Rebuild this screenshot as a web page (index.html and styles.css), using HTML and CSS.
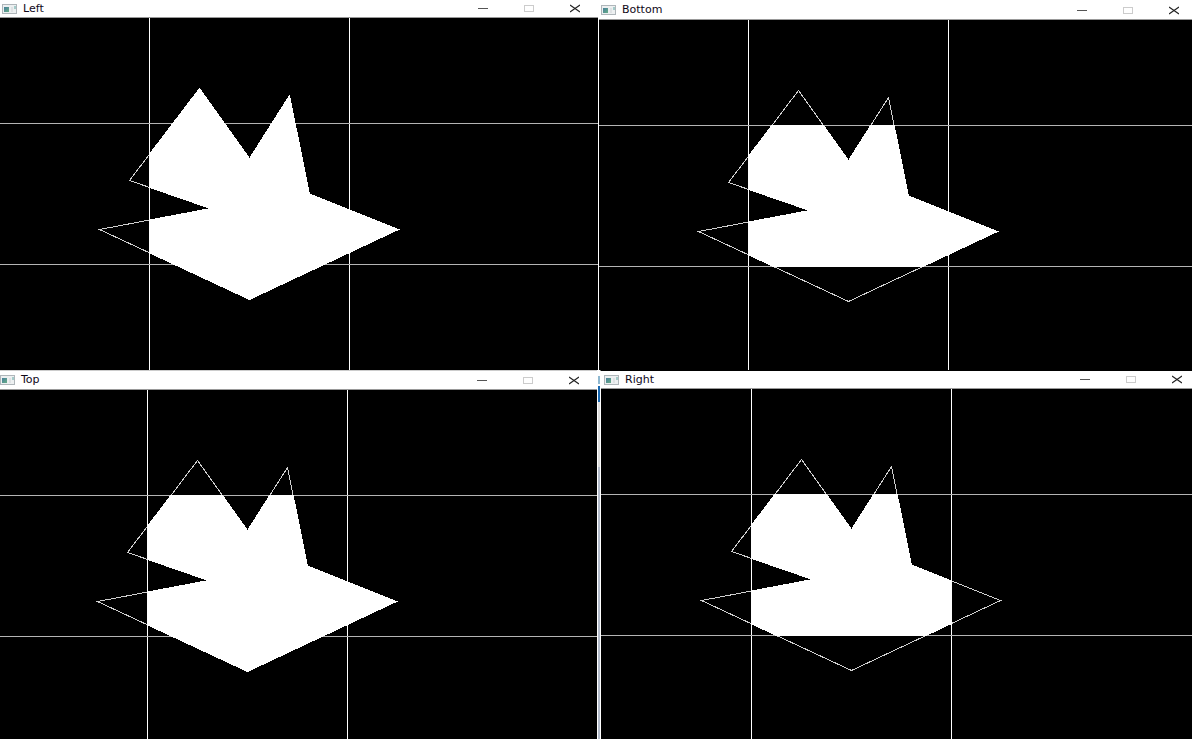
FILE: index.html
```html
<!DOCTYPE html>
<html lang="en">
<head>
<meta charset="utf-8">
<title>Polygon clipping</title>
<link rel="stylesheet" href="styles.css">
</head>
<body>
<svg class="defs" aria-hidden="true">
  <defs>
    <polygon id="shape" points="199.5,70.5 129.5,162.5 210.5,190.5 99.5,211.5 249.5,281.5 398.5,211.5 309.5,176 289.5,77.5 249.5,140.5"/>
    <g id="guides">
      <path d="M149.5 0V2000M349.5 0V2000" stroke="#fff"/>
      <path d="M-10 105.5H3000M-10 246.5H3000" stroke="#b4b4b4"/>
    </g>
    <clipPath id="clip-left"><rect x="149" y="0" width="400" height="400"/></clipPath>
    <clipPath id="clip-top"><rect x="149" y="105" width="400" height="400"/></clipPath>
    <clipPath id="clip-bottom"><rect x="149" y="105" width="400" height="142"/></clipPath>
    <clipPath id="clip-right"><rect x="149" y="105" width="201" height="142"/></clipPath>
    <linearGradient id="app-fill" x1="0" y1="0" x2="1" y2="1"><stop offset="0" stop-color="#477f9b"/><stop offset="1" stop-color="#68ad87"/></linearGradient>
    <symbol id="app" viewBox="0 0 15 10">
      <rect x=".5" y=".5" width="14" height="9" fill="#edf0f1" stroke="#afb6ba"/>
      <rect x="2" y="3" width="5" height="5" fill="url(#app-fill)"/>
      <rect x="9" y="3" width="2" height="5" fill="#dfe2e4"/>
      <rect x="12" y="2" width="2" height="3" fill="#a5ccca"/>
    </symbol>
    <symbol id="min" viewBox="0 0 10 9"><path d="M0 4.5H10" stroke="#555"/></symbol>
    <symbol id="max" viewBox="0 0 10 9"><rect x=".5" y="1.5" width="9" height="6" fill="none" stroke="#ccc"/></symbol>
    <symbol id="close" viewBox="0 0 10 9"><path d="M0 1L10 8M10 1L0 8" stroke="#222" stroke-width="1.1"/></symbol>
  </defs>
</svg>
<main class="desktop">
  <div class="row row-first">
    <section class="window window-left">
      <header class="titlebar">
        <svg class="app-icon" aria-hidden="true"><use href="#app"/></svg>
        <h1 class="title">Left</h1>
        <div class="controls">
          <button class="control" aria-label="Minimize"><svg class="glyph"><use href="#min"/></svg></button>
          <button class="control" aria-label="Maximize" disabled><svg class="glyph"><use href="#max"/></svg></button>
          <button class="control" aria-label="Close"><svg class="glyph"><use href="#close"/></svg></button>
        </div>
      </header>
      <svg class="canvas" role="img" aria-label="Polygon clipped on the left">
        <g><use href="#guides"/><use class="outline" href="#shape"/><g clip-path="url(#clip-left)"><use class="solid" href="#shape"/></g></g>
      </svg>
    </section>
    <section class="window window-bottom">
      <header class="titlebar">
        <svg class="app-icon" aria-hidden="true"><use href="#app"/></svg>
        <h1 class="title">Bottom</h1>
        <div class="controls">
          <button class="control" aria-label="Minimize"><svg class="glyph"><use href="#min"/></svg></button>
          <button class="control" aria-label="Maximize" disabled><svg class="glyph"><use href="#max"/></svg></button>
          <button class="control" aria-label="Close"><svg class="glyph"><use href="#close"/></svg></button>
        </div>
      </header>
      <svg class="canvas" role="img" aria-label="Polygon clipped on the left, top and bottom">
        <g><use href="#guides"/><use class="outline" href="#shape"/><g clip-path="url(#clip-bottom)"><use class="solid" href="#shape"/></g></g>
      </svg>
    </section>
  </div>
  <div class="row row-second">
    <section class="window window-top">
      <header class="titlebar">
        <svg class="app-icon" aria-hidden="true"><use href="#app"/></svg>
        <h1 class="title">Top</h1>
        <div class="controls">
          <button class="control" aria-label="Minimize"><svg class="glyph"><use href="#min"/></svg></button>
          <button class="control" aria-label="Maximize" disabled><svg class="glyph"><use href="#max"/></svg></button>
          <button class="control" aria-label="Close"><svg class="glyph"><use href="#close"/></svg></button>
        </div>
      </header>
      <svg class="canvas" role="img" aria-label="Polygon clipped on the left and top">
        <g transform="translate(-2 0)"><use href="#guides"/><use class="outline" href="#shape"/><g clip-path="url(#clip-top)"><use class="solid" href="#shape"/></g></g>
      </svg>
    </section>
    <div class="backdrop"></div>
    <section class="window window-right">
      <header class="titlebar">
        <svg class="app-icon" aria-hidden="true"><use href="#app"/></svg>
        <h1 class="title">Right</h1>
        <div class="controls">
          <button class="control" aria-label="Minimize"><svg class="glyph"><use href="#min"/></svg></button>
          <button class="control" aria-label="Maximize" disabled><svg class="glyph"><use href="#max"/></svg></button>
          <button class="control" aria-label="Close"><svg class="glyph"><use href="#close"/></svg></button>
        </div>
      </header>
      <svg class="canvas" role="img" aria-label="Polygon clipped on all four sides">
        <g transform="translate(1 0)"><use href="#guides"/><use class="outline" href="#shape"/><g clip-path="url(#clip-right)"><use class="solid" href="#shape"/></g></g>
      </svg>
    </section>
  </div>
</main>
</body>
</html>
```
FILE: styles.css
```css
* { box-sizing: border-box; }
body { margin: 0; background: #000; font-family: "DejaVu Sans", sans-serif; }
.defs { position: absolute; width: 0; height: 0; }
.desktop { display: flex; flex-direction: column; min-height: 100vh; }
.row { display: flex; }
.row-first { flex: 370 1 0; }
.row-second { flex: 369 1 0; }
.window { display: flex; flex-direction: column; min-width: 0; overflow: hidden; background: #000; }
.window-left { flex: 598 1 0; border-right: 1px solid #fff; }
.window-bottom { flex: 593 1 0; }
.window-top { flex: 597 1 0; border-right: 1px solid #fff; }
.window-right { flex: 591 1 0; border-left: 1px solid #fff; border-top: 1px solid #000; }
.backdrop {
  flex: 0 0 2px;
  background: linear-gradient(#fff 0 6px, #8fb8d0 6px 14px, #fff 14px 16px, #1767b0 16px 32px, #dcdcdc 32px 97px, #b4bccb 97px);
}
.titlebar {
  display: flex;
  align-items: center;
  height: 18px;
  padding-left: 2px;
  background: #fff;
  border-bottom: 1px solid #999;
}
.window-bottom .titlebar, .window-top .titlebar { height: 20px; }
.window-bottom .titlebar { padding-top: 1px; }
.window-top .titlebar { padding-left: 0; border-top: 1px solid #ccc; }
.window-right .titlebar { padding-left: 3px; }
.app-icon { flex: none; width: 15px; height: 10px; }
.title { margin: 0 auto 0 6px; font-size: 11px; line-height: 16px; font-weight: 400; color: #100818; }
.controls { display: flex; align-self: stretch; }
.window-bottom .controls { margin-right: -5px; }
.window-right .controls { margin-right: -8px; }
.control {
  display: flex;
  align-items: center;
  justify-content: center;
  width: 46px;
  padding: 0;
  border: 0;
  background: none;
}
.glyph { width: 10px; height: 9px; }
.canvas { display: block; flex: 1; width: 100%; min-height: 0; }
.outline { fill: none; stroke: #d0d0d0; shape-rendering: crispEdges; }
.solid { fill: #fff; stroke: #fff; shape-rendering: crispEdges; }
```
